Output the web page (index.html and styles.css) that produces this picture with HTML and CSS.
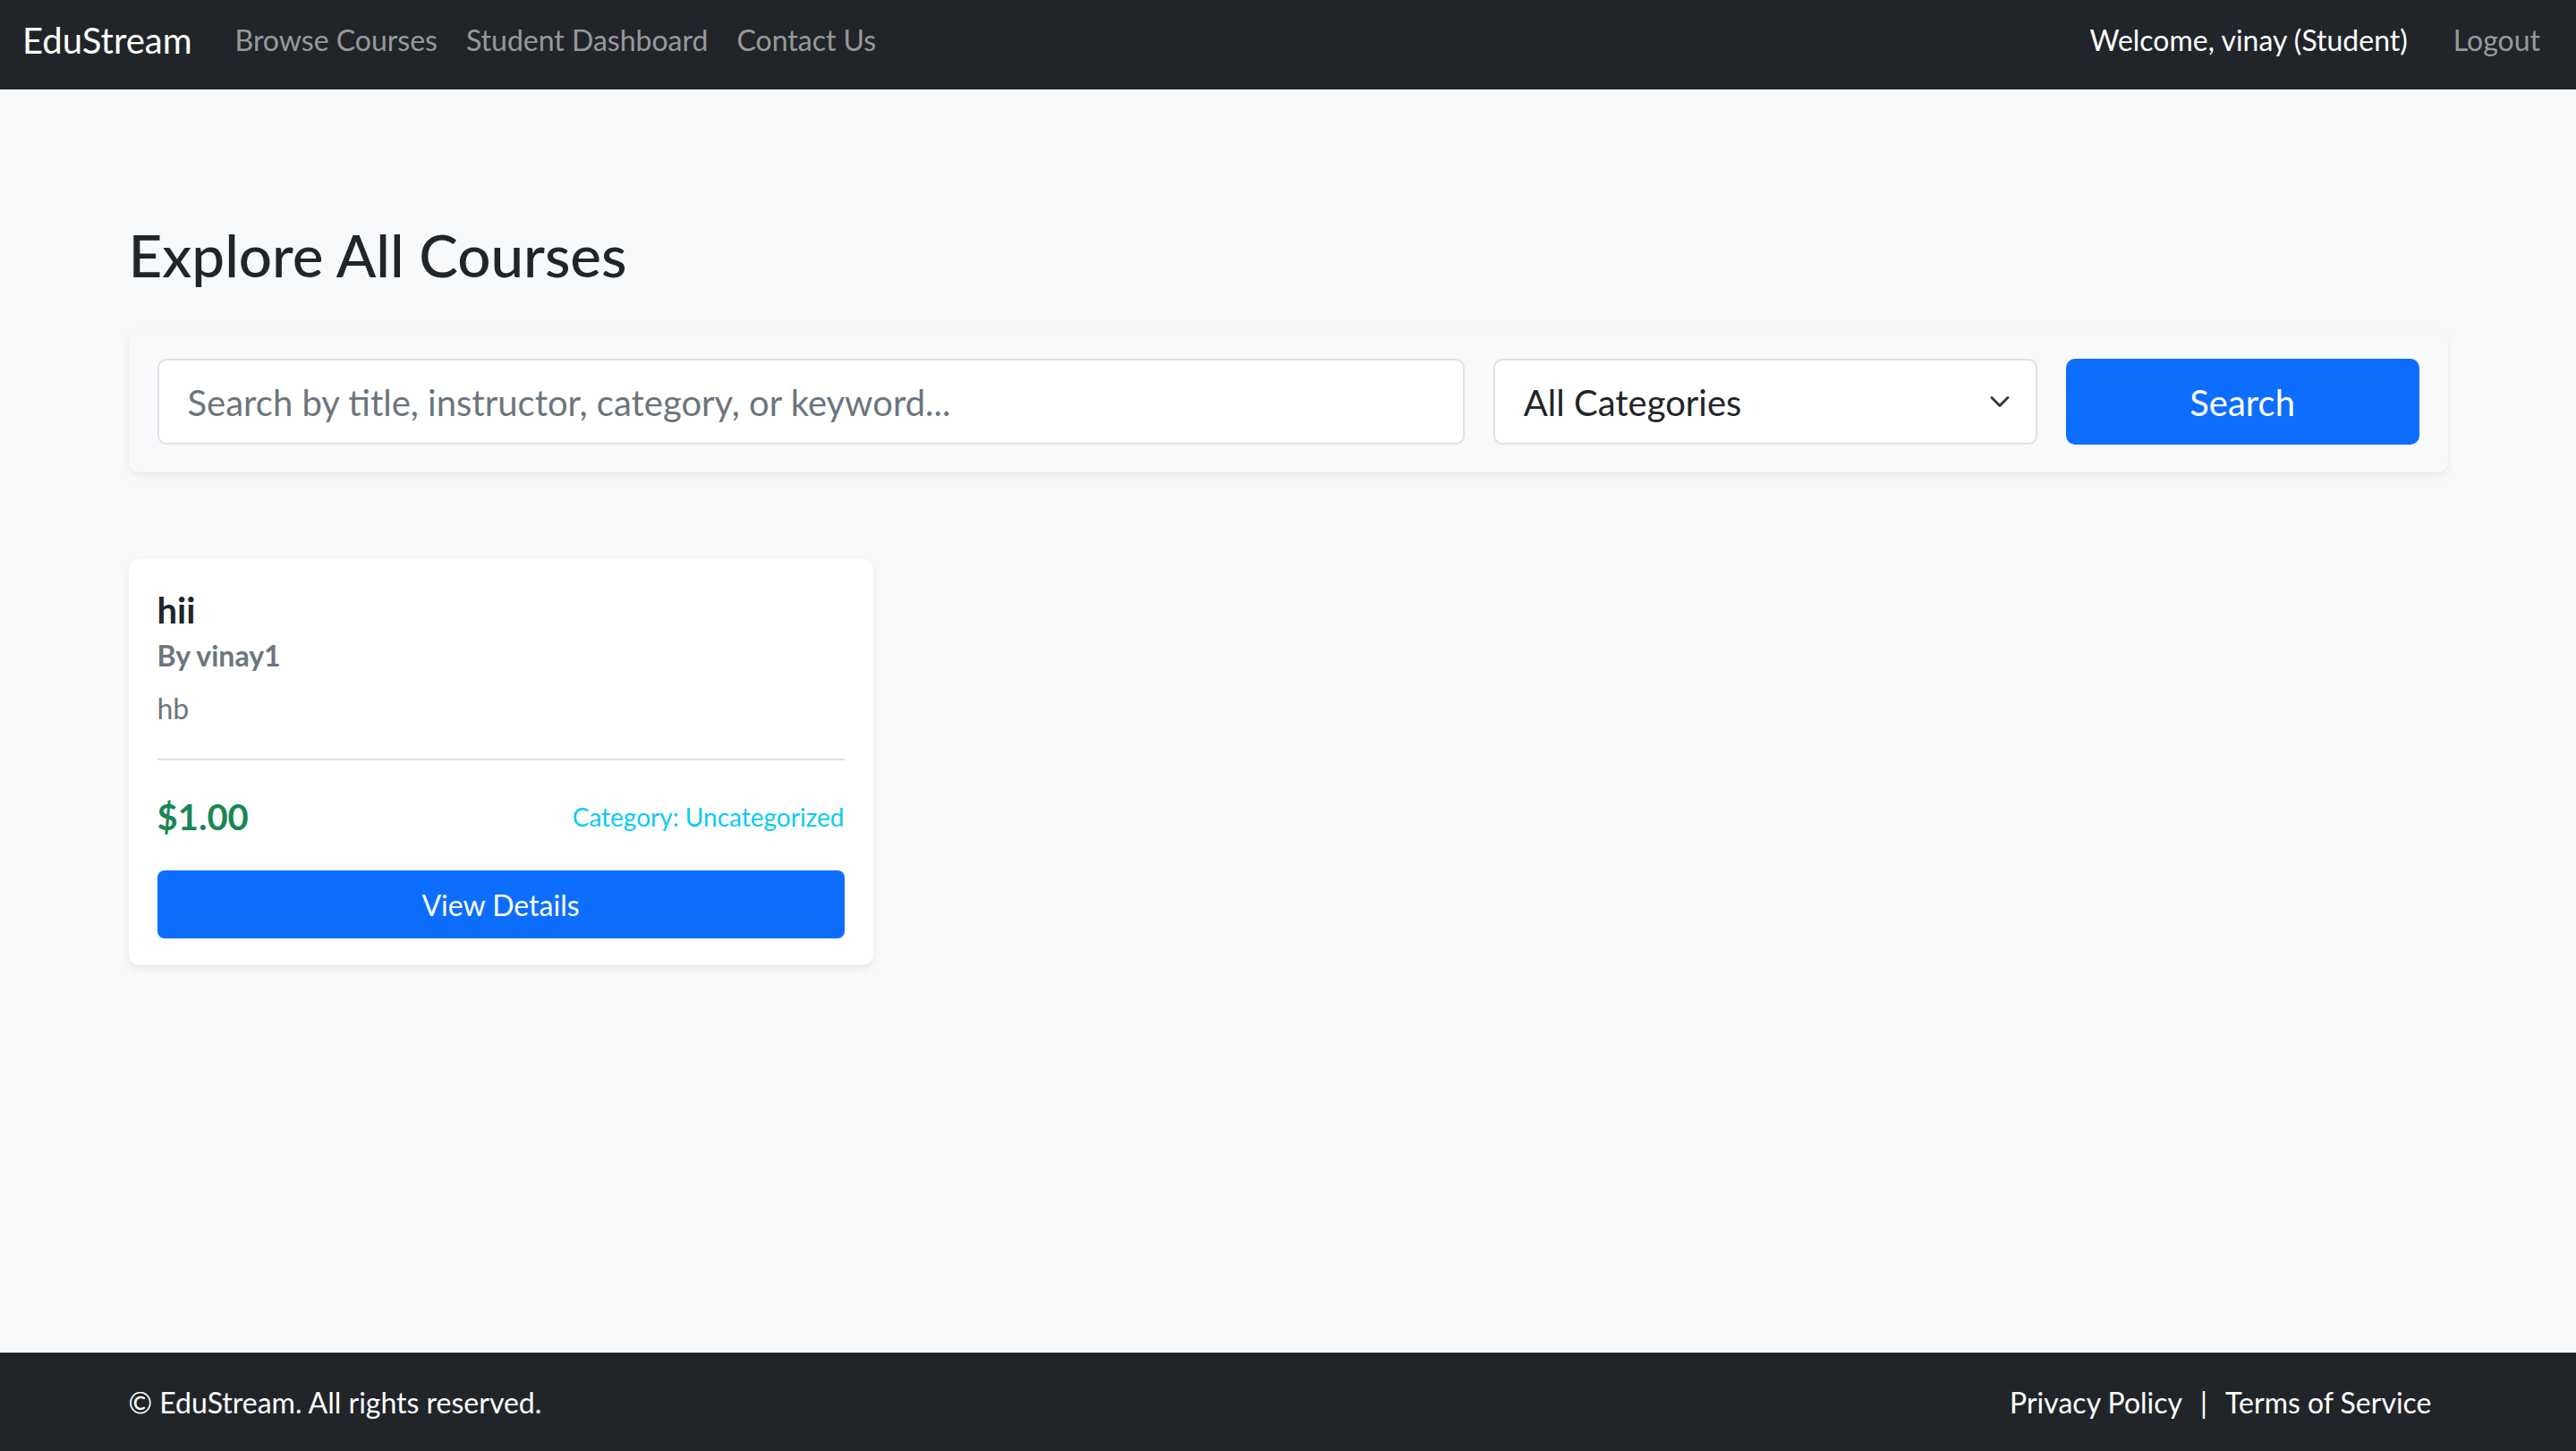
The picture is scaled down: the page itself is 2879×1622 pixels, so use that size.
FILE: index.html
```html
<!DOCTYPE html>
<html lang="en">
<head>
<meta charset="utf-8">
<title>EduStream - Browse Courses</title>
<link rel="stylesheet" href="styles.css">
</head>
<body>
<nav class="navbar">
  <div class="nav-left">
    <a class="brand" href="#">EduStream</a>
    <a class="nav-link" href="#">Browse Courses</a>
    <a class="nav-link" href="#">Student Dashboard</a>
    <a class="nav-link" href="#">Contact Us</a>
  </div>
  <div class="nav-right">
    <span class="welcome">Welcome, vinay (Student)</span>
    <a class="nav-link" href="#">Logout</a>
  </div>
</nav>

<main class="container">
  <h2 class="page-title">Explore All Courses</h2>

  <form class="search-card">
    <input class="field" type="text" placeholder="Search by title, instructor, category, or keyword...">
    <div class="select-wrap">
      <select class="field select">
        <option>All Categories</option>
      </select>
      <svg class="chevron" viewBox="0 0 16 16" aria-hidden="true"><path d="M2 5l6 6 6-6" fill="none" stroke="#343a40" stroke-width="2" stroke-linecap="round" stroke-linejoin="round"/></svg>
    </div>
    <button class="btn-search" type="button">Search</button>
  </form>

  <div class="course-grid">
    <div class="course-card">
      <h5 class="course-title">hii</h5>
      <h6 class="course-author">By vinay1</h6>
      <p class="course-desc">hb</p>
      <hr class="divider">
      <div class="price-row">
        <span class="price">$1.00</span>
        <small class="category">Category: Uncategorized</small>
      </div>
      <a class="btn-details" href="#">View Details</a>
    </div>
  </div>
</main>

<footer class="footer">
  <div class="footer-inner">
    <span>© EduStream. All rights reserved.</span>
    <div class="footer-links">
      <a href="#">Privacy Policy</a>
      <span>|</span>
      <a href="#">Terms of Service</a>
    </div>
  </div>
</footer>
</body>
</html>
```
FILE: styles.css
```css
* { box-sizing: border-box; }

html, body { margin: 0; padding: 0; }

body {
  min-height: 100vh;
  display: flex;
  flex-direction: column;
  font-family: Lato, "Liberation Sans", sans-serif;
  font-size: 32px;
  line-height: 1.5;
  color: #212529;
  background: #f8f9fa;
}

a { text-decoration: none; }

/* ---------- navbar ---------- */
.navbar {
  height: 100px;
  flex: none;
  background: #212529;
  padding: 0 24px 10px;
  display: flex;
  align-items: center;
  justify-content: space-between;
}
.nav-left, .nav-right {
  display: flex;
  align-items: center;
}
.brand {
  font-size: 40px;
  line-height: 60px;
  color: #fff;
  margin-right: 32px;
  padding-left: 1px;
}
.nav-link {
  font-size: 32px;
  line-height: 48px;
  padding: 0 16px;
  color: rgba(255, 255, 255, 0.55);
}
.welcome {
  font-size: 32px;
  line-height: 48px;
  color: #fff;
  margin-right: 35px;
}

/* ---------- main ---------- */
.container {
  flex: 1 0 auto;
  width: 100%;
  max-width: 2640px;
  margin: 0 auto;
  padding: 146px 24px 0;
}
.page-title {
  margin: 0 0 45px;
  font-size: 65.5px;
  line-height: 78px;
  font-weight: 500;
  color: #212529;
}

.search-card {
  margin: 0;
  padding: 32px 32px 31px;
  background: #f8f9fa;
  border-radius: 12px;
  box-shadow: 0 4px 8px rgba(0, 0, 0, 0.075);
  display: grid;
  grid-template-columns: calc((100% + 32px) * 7 / 12 - 32px) calc((100% + 32px) / 4 - 32px) 1fr;
  gap: 32px;
}
.field {
  display: block;
  width: 100%;
  height: 96px;
  padding: 2px 32px 0;
  font-family: inherit;
  font-size: 40px;
  color: #212529;
  background: #fff;
  border: 2px solid #dee2e6;
  border-radius: 10px;
  outline: none;
}
.field::placeholder { color: #6c757d; opacity: 1; }
.select-wrap { position: relative; }
.select {
  appearance: none;
  -webkit-appearance: none;
  padding-right: 96px;
}
.chevron {
  position: absolute;
  right: 30px;
  top: 36px;
  width: 24px;
  height: 24px;
  pointer-events: none;
}
.btn-search {
  height: 96px;
  padding-top: 2px;
  border: 0;
  border-radius: 10px;
  background: #0d6efd;
  color: #fff;
  font-family: inherit;
  font-size: 40px;
}

.course-grid {
  margin-top: 97px;
  display: grid;
  grid-template-columns: repeat(3, 1fr);
  gap: 48px;
}
.course-card {
  background: #fff;
  border-radius: 12px;
  box-shadow: 0 4px 8px rgba(0, 0, 0, 0.075);
  padding: 33px 32px 30px;
}
.course-title {
  margin: 0 0 16px;
  font-size: 40px;
  line-height: 48px;
  font-weight: 700;
  color: #212529;
}
.course-author {
  margin: -8px 0 16px;
  font-size: 32px;
  line-height: 38px;
  font-weight: 700;
  color: #6c757d;
}
.course-desc {
  margin: 0 0 32px;
  font-size: 32px;
  line-height: 48px;
  color: #6c757d;
}
.divider {
  margin: 0 0 39px;
  border: 0;
  border-top: 2px solid #dee2e6;
}
.price-row {
  height: 48px;
  margin-bottom: 36px;
  display: flex;
  align-items: center;
  justify-content: space-between;
}
.price {
  font-size: 40px;
  line-height: 48px;
  font-weight: 700;
  color: #198754;
}
.category {
  font-size: 28px;
  line-height: 42px;
  color: #0dcaf0;
}
.btn-details {
  display: block;
  height: 76px;
  line-height: 78px;
  text-align: center;
  border-radius: 8px;
  background: #0d6efd;
  color: #fff;
  font-size: 32px;
}

/* ---------- footer ---------- */
.footer {
  flex: none;
  background: #212529;
  color: #fff;
  padding: 32px 0 30px;
}
.footer-inner {
  max-width: 2640px;
  margin: 0 auto;
  padding: 0 24px;
  display: flex;
  justify-content: space-between;
  align-items: center;
  line-height: 48px;
}
.footer-links {
  display: flex;
  gap: 20px;
  padding-right: 18px;
}
.footer-links a { color: #fff; }
```
